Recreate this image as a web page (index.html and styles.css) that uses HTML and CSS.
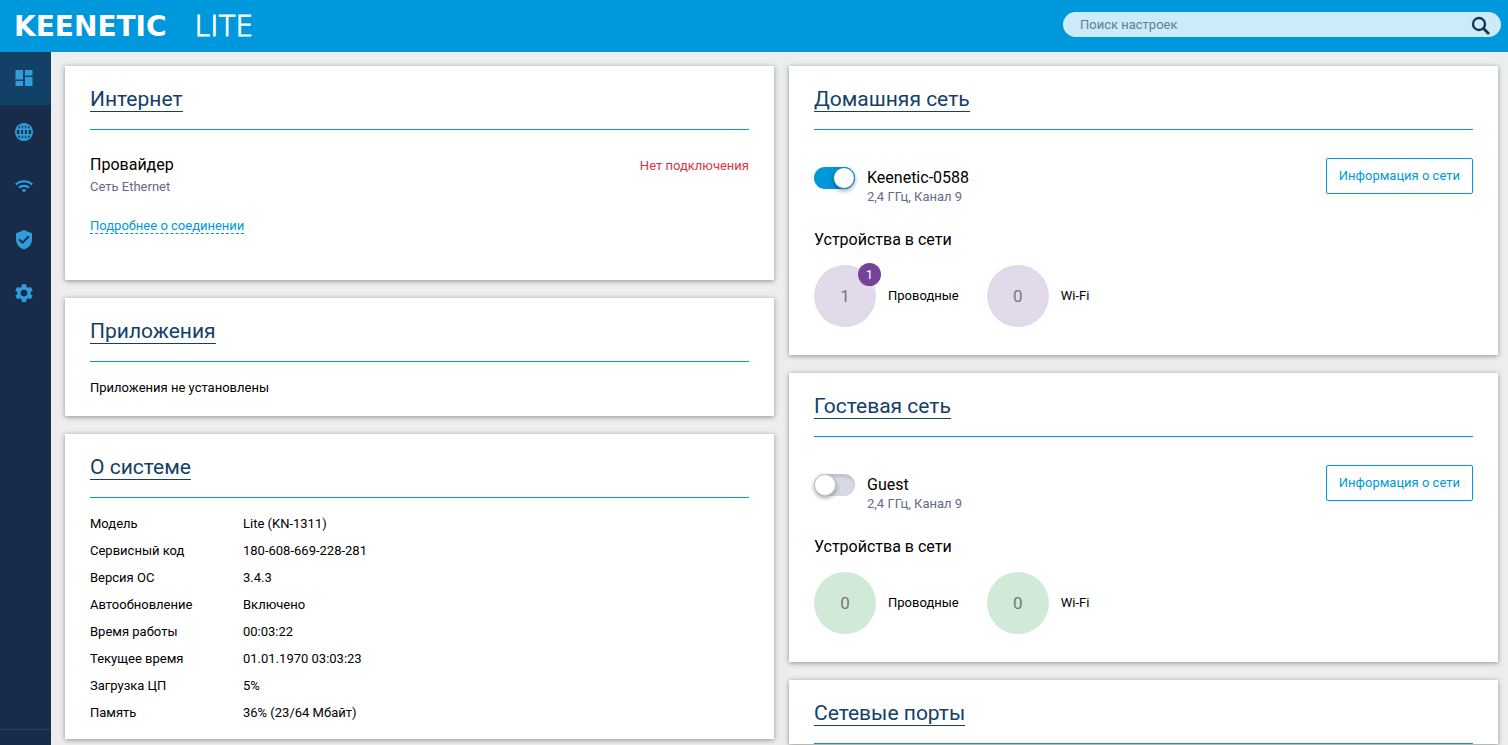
FILE: index.html
```html
<!DOCTYPE html>
<html lang="ru">
<head>
<meta charset="utf-8">
<title>Keenetic Lite</title>
<link rel="stylesheet" href="styles.css">
</head>
<body>
<header class="topbar">
  <div class="brand"><span class="brand-name">KEENETIC</span><span class="brand-model">LITE</span></div>
  <form class="search">
    <input class="search-input" type="search" placeholder="Поиск настроек" aria-label="Поиск настроек">
    <button class="search-button" type="button" aria-label="Найти">
      <svg viewBox="0 0 20 20" width="20" height="20"><circle cx="8" cy="8" r="6" fill="none" stroke="currentColor" stroke-width="2.4"/><path d="M12.3 12.3 18 18" stroke="currentColor" stroke-width="2.8"/></svg>
    </button>
  </form>
</header>
<div class="shell">
  <nav class="sidebar">
    <a class="nav-item active" href="#" aria-label="Системный монитор"><svg viewBox="0 0 24 24"><path d="M3.500 3h7.500v9.500H3.500zM13 3h7.500v5.500H13zM3.500 14h7.500v5H3.500zM13 10h7.500v9H13z"/></svg></a>
    <a class="nav-item" href="#" aria-label="Интернет"><svg viewBox="0 0 24 24"><g fill="none" stroke="currentColor" stroke-width="1.800"><circle cx="12" cy="12" r="8.200"/><ellipse cx="12" cy="12" rx="3.800" ry="8.200"/><path d="M4.300 9.200h15.400M4.300 14.800h15.400M12 3.700v16.600"/></g></svg></a>
    <a class="nav-item" href="#" aria-label="Мои сети и Wi-Fi"><svg viewBox="0 0 24 24"><g fill="none" stroke="currentColor" stroke-width="2.200"><path d="M3.800 10.400a12.200 12.200 0 0 1 16.400 0M7 13.700a7.600 7.600 0 0 1 10 0"/></g><path d="M9.700 16a3.600 3.600 0 0 1 4.600 0L12 18.600z"/></svg></a>
    <a class="nav-item" href="#" aria-label="Сетевые правила"><svg viewBox="0 0 24 24"><path fill-rule="evenodd" d="M12 2 4 5.300v6c0 4.900 3.400 9 8 10.200 4.600-1.200 8-5.300 8-10.200v-6zM10.500 16.100l-4-4 1.400-1.400 2.600 2.600 5.700-5.700 1.400 1.400z"/></svg></a>
    <a class="nav-item" href="#" aria-label="Управление"><svg viewBox="-1 0 26 26"><path fill-rule="evenodd" d="M19.140 12.940c.04-.3.060-.61.060-.94s-.02-.64-.07-.94l2.030-1.580a.49.49 0 0 0 .12-.61l-1.920-3.320a.49.49 0 0 0-.59-.22l-2.390.96a7 7 0 0 0-1.620-.94l-.36-2.540a.48.48 0 0 0-.48-.41h-3.840a.47.47 0 0 0-.47.41l-.36 2.540a7.200 7.200 0 0 0-1.620.94l-2.390-.96a.48.48 0 0 0-.59.220L2.740 8.870a.48.48 0 0 0 .12.610l2.030 1.580a6 6 0 0 0 0 1.880l-2.030 1.580a.49.49 0 0 0-.12.610l1.920 3.320c.12.220.37.290.59.220l2.390-.96c.5.380 1.030.7 1.620.94l.36 2.540c.05.240.24.410.48.410h3.840c.24 0 .44-.17.470-.41l.36-2.540a7 7 0 0 0 1.620-.94l2.390.96c.22.080.47 0 .59-.22l1.920-3.320a.47.47 0 0 0-.12-.61zM12 15.600a3.600 3.600 0 1 1 0-7.200 3.600 3.600 0 0 1 0 7.200z"/></svg></a>
    <div class="sidebar-footer"></div>
  </nav>
  <main class="dashboard">
    <div class="column">
      <section class="card">
        <h2 class="card-header"><a class="card-title" href="#">Интернет</a></h2>
        <div class="provider">
          <div class="provider-row"><span class="name">Провайдер</span><span class="status-error">Нет подключения</span></div>
          <div class="note provider-type">Сеть Ethernet</div>
          <a class="details-link" href="#">Подробнее о соединении</a>
        </div>
      </section>
      <section class="card">
        <h2 class="card-header"><a class="card-title" href="#">Приложения</a></h2>
        <p class="apps-empty">Приложения не установлены</p>
      </section>
      <section class="card">
        <h2 class="card-header"><a class="card-title" href="#">О системе</a></h2>
        <table class="system">
          <tr><th scope="row">Модель</th><td>Lite (KN-1311)</td></tr>
          <tr><th scope="row">Сервисный код</th><td>180-608-669-228-281</td></tr>
          <tr><th scope="row">Версия ОС</th><td>3.4.3</td></tr>
          <tr><th scope="row">Автообновление</th><td>Включено</td></tr>
          <tr><th scope="row">Время работы</th><td>00:03:22</td></tr>
          <tr><th scope="row">Текущее время</th><td>01.01.1970 03:03:23</td></tr>
          <tr><th scope="row">Загрузка ЦП</th><td>5%</td></tr>
          <tr><th scope="row">Память</th><td>36% (23/64 Мбайт)</td></tr>
        </table>
      </section>
    </div>
    <div class="column">
      <section class="card">
        <h2 class="card-header"><a class="card-title" href="#">Домашняя сеть</a></h2>
        <div class="network">
          <div class="network-row">
            <input class="toggle" type="checkbox" id="home-wifi" checked>
            <div class="network-label"><label class="name" for="home-wifi">Keenetic-0588</label><div class="note">2,4 ГГц, Канал 9</div></div>
            <button class="info-button" type="button">Информация о сети</button>
          </div>
          <h3 class="devices-title name">Устройства в сети</h3>
          <div class="devices home">
            <div class="device"><span class="count">1<span class="badge">1</span></span><span>Проводные</span></div>
            <div class="device"><span class="count">0</span><span>Wi-Fi</span></div>
          </div>
        </div>
      </section>
      <section class="card">
        <h2 class="card-header"><a class="card-title" href="#">Гостевая сеть</a></h2>
        <div class="network">
          <div class="network-row">
            <input class="toggle" type="checkbox" id="guest-wifi">
            <div class="network-label"><label class="name" for="guest-wifi">Guest</label><div class="note">2,4 ГГц, Канал 9</div></div>
            <button class="info-button" type="button">Информация о сети</button>
          </div>
          <h3 class="devices-title name">Устройства в сети</h3>
          <div class="devices guest">
            <div class="device"><span class="count">0</span><span>Проводные</span></div>
            <div class="device"><span class="count">0</span><span>Wi-Fi</span></div>
          </div>
        </div>
      </section>
      <section class="card">
        <h2 class="card-header"><a class="card-title" href="#">Сетевые порты</a></h2>
      </section>
    </div>
  </main>
</div>
</body>
</html>
```

FILE: styles.css
```css
*, *::before { box-sizing: border-box; }
body {
  margin: 0;
  height: 100vh;
  display: flex;
  flex-direction: column;
  overflow: hidden;
  background: #ecedef;
  color: #000;
  font: 13px/18px Roboto, "Liberation Sans", sans-serif;
}
h2, h3, p { margin: 0; font-weight: 400; }
a { text-decoration: none; }

.topbar {
  display: flex;
  flex: none;
  align-items: center;
  justify-content: space-between;
  height: 52px;
  padding: 0 7px 0 14px;
  background: #0098dc;
}
.brand {
  display: flex;
  gap: 28px;
  padding-top: 2px;
  color: #fff;
  font: 28px/32px "DejaVu Sans", sans-serif;
}
.brand-name { font-weight: 700; }
.brand-model { font-weight: 200; -webkit-text-stroke: 1px #fff; }
.search {
  display: flex;
  align-items: center;
  width: 438px;
  height: 25px;
  margin-bottom: 3px;
  padding: 0 10px 0 17px;
  border-radius: 13px;
  background: #cceaf8;
}
.search-input {
  flex: 1;
  min-width: 0;
  padding: 0;
  border: 0;
  outline: 0;
  background: none;
  color: #134067;
  font: inherit;
}
.search-input::placeholder { color: #5c7f92; }
.search-button {
  display: flex;
  padding: 3px 0 0;
  border: 0;
  background: none;
  color: #123a57;
}

.shell { display: flex; flex: 1; min-height: 0; }
.sidebar {
  display: flex;
  flex: none;
  flex-direction: column;
  width: 51px;
  background: #182b4b;
}
.nav-item {
  display: flex;
  align-items: center;
  height: 54px;
  padding-left: 12px;
  color: #309dda;
}
.nav-item.active { height: 53px; background: #134067; }
.nav-item svg { width: 24px; height: 24px; fill: currentColor; }
.sidebar-footer {
  height: 16px;
  margin-top: auto;
  border-top: 1px solid #2e4263;
}

.dashboard {
  display: grid;
  flex: 1;
  grid-template-columns: 1fr 1fr;
  gap: 15px;
  padding: 14px 10px 0 14px;
  overflow: hidden;
}
.column { display: flex; flex-direction: column; gap: 18px; min-width: 0; }
.card {
  flex: none;
  padding: 22px 25px 0;
  background: #fff;
  box-shadow: 0 1px 5px rgba(0, 0, 0, .4);
}
.card-header {
  display: flex;
  padding-bottom: 17px;
  border-bottom: 1px solid #0098dc;
}
.card-title {
  border-bottom: 1px solid #134067;
  color: #134067;
  font-size: 21px;
  line-height: 23px;
}
.name { font-size: 16px; line-height: 20px; }
.note { color: #646b85; }

.provider { padding: 25px 0 45px; }
.provider-row { display: flex; align-items: baseline; justify-content: space-between; }
.status-error { color: #dc3545; }
.provider-type { margin: 3px 0 21px; }
.details-link {
  display: inline-block;
  height: 17px;
  border-bottom: 1px dashed #0098dc;
  color: #0098dc;
}
.apps-empty { padding: 17px 0 19px; }

.system { margin-top: 12px; padding-bottom: 13px; border-spacing: 0; }
.system th, .system td { height: 27px; padding: 0; text-align: left; font-weight: 400; }
.system th { width: 153px; }

.network { padding: 28px 0; }
.network-row { display: flex; align-items: flex-start; }
.toggle {
  appearance: none;
  width: 41px;
  height: 22px;
  margin: 9px 12px 0 0;
  border-radius: 11px;
  background: #d5d9e3;
  box-shadow: inset 0 3px 2px rgba(0, 0, 0, .1);
}
.toggle::before {
  content: "";
  display: block;
  width: 22px;
  height: 22px;
  border: 1px solid #c4c8d0;
  border-radius: 50%;
  background: #fff;
  box-shadow: 0 2px 4px rgba(0, 0, 0, .35);
}
.toggle:checked { background: #0098dc; box-shadow: none; }
.toggle:checked::before { margin-left: auto; border-color: #0086c2; }
.network-label { flex: 1; padding-top: 10px; }
.network-label label { display: block; }
.info-button {
  padding: 8px 12px;
  border: 1px solid #0098dc;
  border-radius: 2px;
  background: #fff;
  color: #0098dc;
  font: inherit;
}
.devices-title { margin: 24px 0 15px; }
.devices { display: flex; gap: 28px; }
.device { display: flex; align-items: center; gap: 12px; }
.count {
  position: relative;
  width: 62px;
  border-radius: 50%;
  color: #777;
  font-size: 17px;
  line-height: 62px;
  text-align: center;
}
.home .count { background: #e2daeb; }
.guest .count { background: #d1ead8; }
.badge {
  position: absolute;
  top: -2px;
  right: -5px;
  width: 23px;
  border-radius: 50%;
  background: #734499;
  color: #fff;
  font-size: 13px;
  line-height: 23px;
}
```
